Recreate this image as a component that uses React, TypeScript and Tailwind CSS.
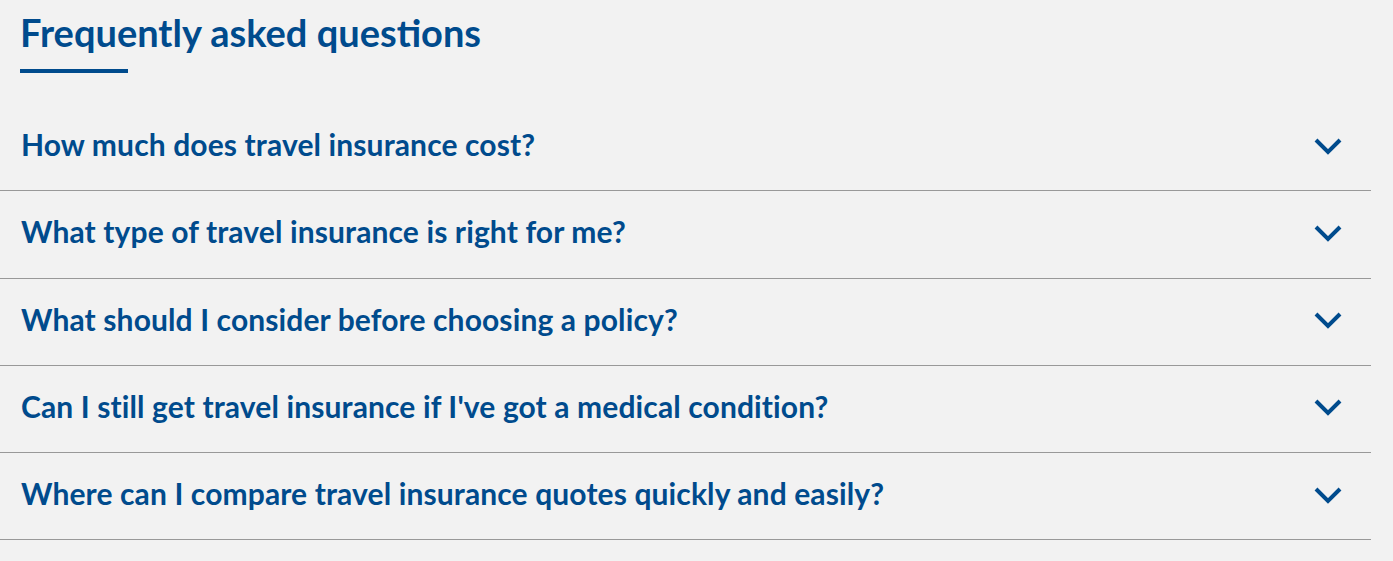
const questions = [
  "How much does travel insurance cost?",
  "What type of travel insurance is right for me?",
  "What should I consider before choosing a policy?",
  "Can I still get travel insurance if I've got a medical condition?",
  "Where can I compare travel insurance quotes quickly and easily?",
];

function Chevron() {
  return (
    <svg
      viewBox="0 0 28 20"
      className="mb-[3px] h-[20px] w-[28px]"
      fill="none"
      stroke="currentColor"
      strokeWidth={4}
    >
      <path d="M2 4 L14 16 L26 4" />
    </svg>
  );
}

export default function App() {
  return (
    <div className="min-h-[561px] w-full bg-[#f2f2f2] font-['Lato',sans-serif] text-[#004b8d]">
      <div className="w-[1371px]">
        <div className="pl-[20px] pt-[9px]">
          <h2 className="text-[38px] font-bold leading-[46px]">Frequently asked questions</h2>
          <div className="mt-[14px] h-[4px] w-[108px] bg-[#004b8d]" />
        </div>
        <div className="mt-[31px]">
          {questions.map((q) => (
            <button
              key={q}
              type="button"
              className="flex h-[87.25px] w-full items-center justify-between border-b border-[#999999] pl-[21px] pr-[29px] text-left"
            >
              <span className="mb-[6px] text-[30px] font-bold leading-[36px] tracking-[0.12px]">{q}</span>
              <Chevron />
            </button>
          ))}
        </div>
      </div>
    </div>
  );
}
